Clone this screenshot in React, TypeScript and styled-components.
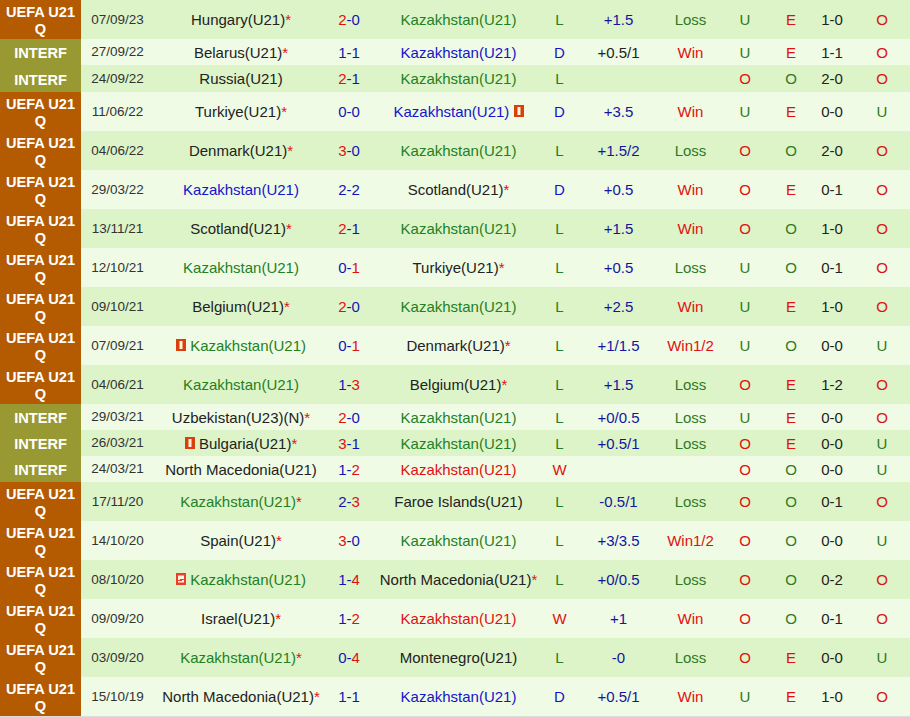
import * as React from "react";
import styled, { createGlobalStyle } from "styled-components";

const GlobalStyle = createGlobalStyle`
  body {
    margin: 0;
    background: #fff;
    font-family: "Liberation Sans", Arial, sans-serif;
    font-size: 15px;
    color: #222;
  }
`;

const Table = styled.div`
  width: 910px;
  border-bottom: 1px solid #ddd;
`;

const Row = styled.div<{ $even: boolean; $height: number }>`
  display: grid;
  grid-template-columns: 81px 73px 174px 42px 177px 25px 93px 51px 58px 34px 48px 52px;
  height: ${({ $height }) => $height}px;
  align-items: center;
  text-align: center;
  background: ${({ $even }) => ($even ? "#effbe5" : "#ddf4c8")};
`;

const League = styled.div<{ $interf: boolean }>`
  align-self: stretch;
  display: flex;
  align-items: center;
  justify-content: center;
  padding-top: 3px;
  font-size: 14.6px;
  font-weight: bold;
  line-height: 17px;
  color: #fff;
  background: ${({ $interf }) => ($interf ? "#999933" : "#b45a00")};
`;

const DateCell = styled.div`
  color: #333;
  font-size: 13.5px;
  padding-bottom: 1px;
`;

const Team = styled.div<{ $color: string }>`
  color: ${({ $color }) => $color};
  white-space: nowrap;
`;

const Star = styled.span`
  color: #e01010;
`;

const Score = styled.div`
  color: #1414b4;
`;

const Goal = styled.span<{ $won: boolean }>`
  color: ${({ $won }) => ($won ? "#e01010" : "#1414b4")};
`;

const Mark = styled.div<{ $color: string }>`
  color: ${({ $color }) => $color};
`;

const Halftime = styled.div`
  color: #222;
`;

const Card = styled.svg`
  display: inline-block;
  width: 10px;
  height: 12px;
  vertical-align: 0;
`;

const YellowRedCard = () => (
  <Card viewBox="0 0 10 12">
    <rect width="10" height="12" fill="#d8400c" />
    <rect x="3.5" y="2" width="3" height="8" fill="#fff2e0" />
  </Card>
);

const TwoCard = () => (
  <Card viewBox="0 0 10 12">
    <rect width="10" height="12" fill="#e8402a" />
    <path d="M2 2.5h6v3.5H4v1h4v2.5H2V8h4V7H2z" fill="#fff2e0" />
  </Card>
);

const GREEN = "#1f801f";
const BLUE = "#1414cc";
const HCP_BLUE = "#1414a0";
const RED = "#e01010";
const BLACK = "#222";
const DARK = "#2f7a1f";

const K = "Kazakhstan(U21)";

type Match = {
  league: "U" | "I";
  date: string;
  home: string;
  homeStar?: boolean;
  homeCard?: React.ReactNode;
  away: string;
  awayStar?: boolean;
  awayCard?: React.ReactNode;
  score: [number, number];
  res: "L" | "D" | "W";
  hcp: string;
  hcpColor?: string;
  out: string;
  ou: string;
  oe: string;
  ht: string;
  last: string;
};

const m: Match[] = [
  { league: "U", date: "07/09/23", home: "Hungary(U21)", homeStar: true, away: K, score: [2, 0], res: "L", hcp: "+1.5", out: "Loss", ou: "U", oe: "E", ht: "1-0", last: "O" },
  { league: "I", date: "27/09/22", home: "Belarus(U21)", homeStar: true, away: K, score: [1, 1], res: "D", hcp: "+0.5/1", hcpColor: BLACK, out: "Win", ou: "U", oe: "E", ht: "1-1", last: "O" },
  { league: "I", date: "24/09/22", home: "Russia(U21)", away: K, score: [2, 1], res: "L", hcp: "", out: "", ou: "O", oe: "O", ht: "2-0", last: "O" },
  { league: "U", date: "11/06/22", home: "Turkiye(U21)", homeStar: true, away: K, awayCard: <YellowRedCard />, score: [0, 0], res: "D", hcp: "+3.5", out: "Win", ou: "U", oe: "E", ht: "0-0", last: "U" },
  { league: "U", date: "04/06/22", home: "Denmark(U21)", homeStar: true, away: K, score: [3, 0], res: "L", hcp: "+1.5/2", out: "Loss", ou: "O", oe: "O", ht: "2-0", last: "O" },
  { league: "U", date: "29/03/22", home: K, away: "Scotland(U21)", awayStar: true, score: [2, 2], res: "D", hcp: "+0.5", out: "Win", ou: "O", oe: "E", ht: "0-1", last: "O" },
  { league: "U", date: "13/11/21", home: "Scotland(U21)", homeStar: true, away: K, score: [2, 1], res: "L", hcp: "+1.5", out: "Win", ou: "O", oe: "O", ht: "1-0", last: "O" },
  { league: "U", date: "12/10/21", home: K, away: "Turkiye(U21)", awayStar: true, score: [0, 1], res: "L", hcp: "+0.5", out: "Loss", ou: "U", oe: "O", ht: "0-1", last: "O" },
  { league: "U", date: "09/10/21", home: "Belgium(U21)", homeStar: true, away: K, score: [2, 0], res: "L", hcp: "+2.5", out: "Win", ou: "U", oe: "E", ht: "1-0", last: "O" },
  { league: "U", date: "07/09/21", home: K, homeCard: <YellowRedCard />, away: "Denmark(U21)", awayStar: true, score: [0, 1], res: "L", hcp: "+1/1.5", out: "Win1/2", ou: "U", oe: "O", ht: "0-0", last: "U" },
  { league: "U", date: "04/06/21", home: K, away: "Belgium(U21)", awayStar: true, score: [1, 3], res: "L", hcp: "+1.5", out: "Loss", ou: "O", oe: "E", ht: "1-2", last: "O" },
  { league: "I", date: "29/03/21", home: "Uzbekistan(U23)(N)", homeStar: true, away: K, score: [2, 0], res: "L", hcp: "+0/0.5", out: "Loss", ou: "U", oe: "E", ht: "0-0", last: "O" },
  { league: "I", date: "26/03/21", home: "Bulgaria(U21)", homeStar: true, homeCard: <YellowRedCard />, away: K, score: [3, 1], res: "L", hcp: "+0.5/1", out: "Loss", ou: "O", oe: "E", ht: "0-0", last: "U" },
  { league: "I", date: "24/03/21", home: "North Macedonia(U21)", away: K, score: [1, 2], res: "W", hcp: "", out: "", ou: "O", oe: "O", ht: "0-0", last: "U" },
  { league: "U", date: "17/11/20", home: K, homeStar: true, away: "Faroe Islands(U21)", score: [2, 3], res: "L", hcp: "-0.5/1", out: "Loss", ou: "O", oe: "O", ht: "0-1", last: "O" },
  { league: "U", date: "14/10/20", home: "Spain(U21)", homeStar: true, away: K, score: [3, 0], res: "L", hcp: "+3/3.5", out: "Win1/2", ou: "O", oe: "O", ht: "0-0", last: "U" },
  { league: "U", date: "08/10/20", home: K, homeCard: <TwoCard />, away: "North Macedonia(U21)", awayStar: true, score: [1, 4], res: "L", hcp: "+0/0.5", out: "Loss", ou: "O", oe: "O", ht: "0-2", last: "O" },
  { league: "U", date: "09/09/20", home: "Israel(U21)", homeStar: true, away: K, score: [1, 2], res: "W", hcp: "+1", out: "Win", ou: "O", oe: "O", ht: "0-1", last: "O" },
  { league: "U", date: "03/09/20", home: K, homeStar: true, away: "Montenegro(U21)", score: [0, 4], res: "L", hcp: "-0", out: "Loss", ou: "O", oe: "E", ht: "0-0", last: "U" },
  { league: "U", date: "15/10/19", home: "North Macedonia(U21)", homeStar: true, away: K, score: [1, 1], res: "D", hcp: "+0.5/1", out: "Win", ou: "U", oe: "E", ht: "1-0", last: "O" },
];

const resColor = { L: GREEN, D: BLUE, W: RED };

const teamColor = (name: string, res: Match["res"]) =>
  name === K ? resColor[res] : BLACK;

const rowHeight = (r: Match, i: number) =>
  r.league === "I" ? (i === 2 ? 27 : 26) : 39;

const App: React.FC = () => (
  <>
    <GlobalStyle />
    <Table>
      {m.map((r, i) => (
        <Row key={r.date} $even={i % 2 === 1} $height={rowHeight(r, i)}>
          <League $interf={r.league === "I"}>
            {r.league === "I" ? "INTERF" : "UEFA U21 Q"}
          </League>
          <DateCell>{r.date}</DateCell>
          <Team $color={teamColor(r.home, r.res)}>
            {r.homeCard} {r.home}
            {r.homeStar && <Star>*</Star>}
          </Team>
          <Score>
            <Goal $won={r.score[0] > r.score[1]}>{r.score[0]}</Goal>-
            <Goal $won={r.score[1] > r.score[0]}>{r.score[1]}</Goal>
          </Score>
          <Team $color={teamColor(r.away, r.res)}>
            {r.away}
            {r.awayStar && <Star>*</Star>} {r.awayCard}
          </Team>
          <Mark $color={resColor[r.res]}>{r.res}</Mark>
          <Mark $color={r.hcpColor ?? HCP_BLUE}>{r.hcp}</Mark>
          <Mark $color={r.out === "Loss" ? DARK : RED}>{r.out}</Mark>
          <Mark $color={r.ou === "O" ? RED : DARK}>{r.ou}</Mark>
          <Mark $color={r.oe === "E" ? RED : DARK}>{r.oe}</Mark>
          <Halftime>{r.ht}</Halftime>
          <Mark $color={r.last === "O" ? RED : DARK}>{r.last}</Mark>
        </Row>
      ))}
    </Table>
  </>
);

export default App;
